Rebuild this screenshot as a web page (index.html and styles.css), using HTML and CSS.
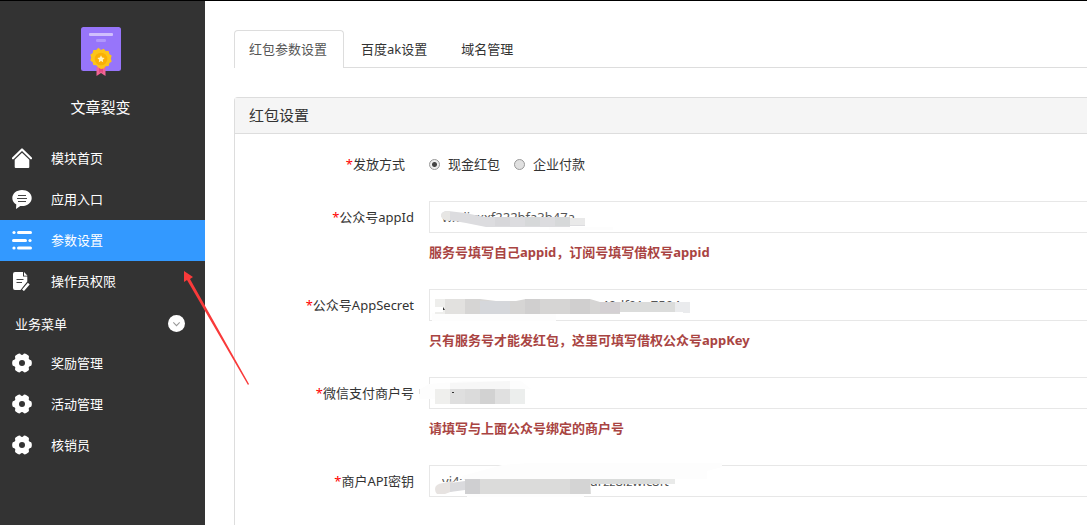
FILE: index.html
```html
<!DOCTYPE html>
<html lang="zh-CN">
<head>
<meta charset="utf-8">
<meta name="viewport" content="width=device-width, initial-scale=1">
<title>文章裂变</title>
<link rel="stylesheet" href="styles.css">
</head>
<body>
<svg class="defs" aria-hidden="true">
  <symbol id="gear" viewBox="0 0 20 20">
    <g fill="#fff">
      <circle cx="10" cy="10" r="8.2"/>
      <rect x="0.2" y="6.7" width="19.6" height="6.6" rx="2.4"/>
      <rect x="0.2" y="6.7" width="19.6" height="6.6" rx="2.4" transform="rotate(60 10 10)"/>
      <rect x="0.2" y="6.7" width="19.6" height="6.6" rx="2.4" transform="rotate(120 10 10)"/>
    </g>
    <circle cx="10" cy="10" r="3" fill="#333"/>
  </symbol>
</svg>
<div class="layout">
  <aside class="sidebar">
    <div class="brand">
      <svg class="logo" viewBox="0 0 40 50" aria-hidden="true">
        <rect width="40" height="44" rx="2.5" fill="#9775fa"/>
        <rect x="8" y="6" width="24" height="3" rx="1" fill="#d0bffd"/>
        <rect x="15" y="12" width="10" height="3" rx="1.2" fill="#b197fc"/>
        <path d="M15.5 40h9v9l-4.5-3-4.5 3z" fill="#f06595"/>
        <path d="M18 41h4v5l-2-1.500-2 1.500z" fill="#e64980"/>
        <path d="M20 23l2.700-1.200 2 2.200 3 .1.600 2.900 2.400 1.800-.9 2.800.9 2.900-2.400 1.700-.6 2.900-3 .2-2 2.200L20 42l-2.700-1.500-2-2.200-3-.2-.6-2.900-2.400-1.700.9-2.900-.9-2.800 2.400-1.800.6-2.900 3-.1 2-2.200z" fill="#fcc419"/>
        <circle cx="20" cy="32" r="6.300" fill="#fab005"/>
        <path d="M20 28.300l1.100 2.300 2.500.4-1.800 1.800.4 2.500-2.200-1.200-2.200 1.200.4-2.500-1.800-1.800 2.500-.4z" fill="#fff3bf"/>
      </svg>
      <div class="brand-name">文章裂变</div>
    </div>
    <nav class="menu">
      <a class="item" href="#"><svg class="icon" viewBox="0 0 20 20" aria-hidden="true"><path d="M1 10.300L10 1.500l9 8.800" fill="none" stroke="#fff" stroke-width="2.200" stroke-linecap="round" stroke-linejoin="round"/><path d="M10 4.800l7.300 7V19a1 1 0 0 1-1 1H3.700a1 1 0 0 1-1-1v-7.200z" fill="#fff"/></svg>模块首页</a>
      <a class="item" href="#"><svg class="icon" viewBox="0 0 20 20" aria-hidden="true"><path d="M10 1C4.500 1 .3 4.600.3 9c0 2.800 1.500 5 4 6.500L4 20l4.300-3 1.700.1c5.500 0 9.700-3.600 9.700-8.100S15.500 1 10 1z" fill="#fff"/><path d="M6 6.500h8M5 9.500h10M6 12.500h8" stroke="#444" stroke-width="1.100"/></svg>应用入口</a>
      <a class="item active" href="#"><svg class="icon" viewBox="0 0 20 20" aria-hidden="true"><g fill="#fff"><circle cx="2" cy="2.500" r="1.600"/><rect x="5" y="1" width="15" height="3" rx="1.500"/><rect x="0" y="9" width="15" height="3" rx="1.500"/><circle cx="18" cy="10.500" r="1.600"/><circle cx="2" cy="18" r="1.600"/><rect x="5" y="16.500" width="15" height="3" rx="1.500"/></g></svg>参数设置</a>
      <a class="item" href="#"><svg class="icon" viewBox="0 0 20 20" aria-hidden="true"><path d="M3 1h8v4.500h4.300v5L8.500 19H3a2 2 0 0 1-2-2V3a2 2 0 0 1 2-2z" fill="#fff"/><path d="M12 1l3.500 3.700H12z" fill="#fff"/><path d="M4.500 8.500h7M4.500 11.500h5.500" stroke="#444" stroke-width="1.200"/><path d="M17 12.500L11.500 19" stroke="#333" stroke-width="4"/><path d="M16.800 12.600L11 19.300" stroke="#fff" stroke-width="2.400"/></svg>操作员权限</a>
      <button class="group" type="button">业务菜单<svg class="chevron" viewBox="0 0 16 16" aria-hidden="true"><circle cx="8" cy="8" r="8" fill="#fff"/><path d="M5 7l3 3 3-3" fill="none" stroke="#999" stroke-width="1"/></svg></button>
      <a class="item" href="#"><svg class="icon" aria-hidden="true"><use href="#gear"/></svg>奖励管理</a>
      <a class="item" href="#"><svg class="icon" aria-hidden="true"><use href="#gear"/></svg>活动管理</a>
      <a class="item" href="#"><svg class="icon" aria-hidden="true"><use href="#gear"/></svg>核销员</a>
    </nav>
  </aside>
  <main class="main">
    <nav class="tabs">
      <a class="tab current" href="#">红包参数设置</a>
      <a class="tab" href="#">百度ak设置</a>
      <a class="tab" href="#">域名管理</a>
    </nav>
    <section class="panel">
      <h1 class="panel-title">红包设置</h1>
      <form class="form">
        <div class="row options" role="radiogroup" aria-labelledby="mode">
          <span class="label" id="mode"><span class="req">*</span>发放方式</span>
          <div class="choices">
            <label class="choice"><input class="radio" type="radio" name="mode" checked>现金红包</label>
            <label class="choice"><input class="radio" type="radio" name="mode">企业付款</label>
          </div>
        </div>
        <div class="row">
          <label class="label" for="appid"><span class="req">*</span>公众号appId</label>
          <div class="field">
            <input class="input" id="appid" type="text" value="wxdixxxf222bfa3b47a">
            <svg class="mask" viewBox="0 0 300 32" aria-hidden="true"><path d="M120 26h64v3h-64z" fill="#fdfdfd"/><path d="M12 15q0-5 7-5l17 2 20 4h85v7h15v2h-15v1H57l-10-2-10-2-23-4z" fill="#dcdcdf"/><path d="M12 15q0-5 9-5v10q-8 0-9-5z" fill="#e7e6e4"/><path d="M66 16h15v9H66z" fill="#d7d7da"/><path d="M96 16h15v9H96zM126 16h15v9h-15z" fill="#d6d8d9"/><path d="M141 17h15v7h-15z" fill="#e9e9e9"/></svg>
          </div>
          <p class="help">服务号填写自己appid，订阅号填写借权号appid</p>
        </div>
        <div class="row">
          <label class="label" for="secret"><span class="req">*</span>公众号AppSecret</label>
          <div class="field">
            <input class="input" id="secret" type="text" value="dxxxxxxxxxxxxxxxxxxxxxx40df91a7594">
            <svg class="mask" viewBox="0 0 300 32" aria-hidden="true"><path d="M3 24h124v8H3z" fill="#fdfdfd"/><path d="M6 10h10v15H6z" fill="#eeeeec"/><path d="M6 18h8v5H6z" fill="#fff"/><path d="M14 18l2 3h-2z" fill="#333"/><path d="M16 10h20v15H16z" fill="#e2e1df"/><path d="M36 10h15l16 2h20l10-2h64l10 3h20v12H36z" fill="#d6d5d4"/><path d="M51 12h15v13H51zM66 12h15v13H66z" fill="#d5d7db"/><path d="M96 10h15v15H96zM141 10h20v15h-20z" fill="#d0cfcf"/><path d="M171 13h20v11h-20z" fill="#d4d0d3"/><path d="M191 13h55v10h-55z" fill="#dbdcdb"/><path d="M246 13h15v11h-7v-1h-8z" fill="#eaebed"/></svg>
          </div>
          <p class="help">只有服务号才能发红包，这里可填写借权公众号appKey</p>
        </div>
        <div class="row">
          <label class="label" for="mch"><span class="req">*</span>微信支付商户号</label>
          <div class="field">
            <input class="input" id="mch" type="text">
            <svg class="mask" viewBox="0 0 300 32" aria-hidden="true"><path d="M-10 13L0 7l37-3h55l10 8H82v10H-10z" fill="#fdfdfd"/><path d="M-10 12h1v5h-1z" fill="#e2e2e2"/><path d="M21 6l60-2v8H21z" fill="#f7f7f7"/><path d="M6 12h15v15H6z" fill="#efefed"/><path d="M21 12h15v15H21z" fill="#dfdfdf"/><path d="M36 12h15v15H36z" fill="#dbdbdb"/><path d="M51 12h15v15H51z" fill="#d2d2d2"/><path d="M66 12h15v15H66z" fill="#e0e0e0"/><path d="M81 12h15v15H81z" fill="#eceeed"/><path d="M23 15h2v1h-2z" fill="#333"/></svg>
          </div>
          <p class="help">请填写与上面公众号绑定的商户号</p>
        </div>
        <div class="row">
          <label class="label" for="apikey"><span class="req">*</span>商户API密钥</label>
          <div class="field">
            <input class="input" id="apikey" type="text" value="yi4xxxxxxxxxxxxxxxxxxxdrzz8izwic8ft">
            <svg class="mask" viewBox="0 0 300 32" aria-hidden="true"><path d="M73 0L100-2h193v4l-15 4v8H33v-3z" fill="#fdfdfd"/><path d="M38 26h117v6H38z" fill="#fdfdfd"/><path d="M6 23q0-6 8-6h10l12-3v12L6 29z" fill="#fff"/><path d="M6 24q0-5 8-6l10-2v10l-8 3H8q-2-2-2-5z" fill="#e7e3e1"/><path d="M21 18l15-2v9l-15 2z" fill="#dadadd"/><path d="M36 14h15v15H36z" fill="#cfcfd1"/><path d="M51 14h110l1 15H51z" fill="#dbdbda"/><path d="M141 14h20v15h-20z" fill="#d4d4d4"/><path d="M161 14h70v5h-70z" fill="#dadcdb"/><path d="M231 14h15v5h-15z" fill="#e9eae9"/></svg>
          </div>
        </div>
      </form>
    </section>
  </main>
</div>
<svg class="pointer" viewBox="0 0 70 120" aria-hidden="true"><path d="M2 0l9 6-3 2 59 105-1 1L5 9l-3 2z" fill="#f93a3a"/></svg>
</body>
</html>
```
FILE: styles.css
```css
* { box-sizing: border-box; }

body {
  margin: 0;
  font: 13px/20px "Noto Sans", "Noto Sans CJK SC", sans-serif;
  color: #333;
  background: #fff;
  overflow-x: hidden;
}

.defs { display: none; }

.layout {
  display: flex;
  min-height: 100vh;
  border-top: 1px solid #000;
}

.sidebar {
  flex: 0 0 205px;
  background: #333;
  color: #fff;
}

.brand {
  display: flex;
  flex-direction: column;
  align-items: center;
  gap: 20px;
  padding: 26px 4px 21px 0;
}

.logo { width: 40px; height: 50px; }
.brand-name { font-size: 15px; }

.menu { display: flex; flex-direction: column; }

.item {
  display: flex;
  align-items: center;
  gap: 19px;
  height: 41px;
  padding: 0 0 2px 12px;
  color: #fff;
  text-decoration: none;
}

.item.active { background: #39f; }
.icon { width: 20px; height: 20px; }

.group {
  display: flex;
  align-items: center;
  justify-content: space-between;
  height: 41px;
  padding: 2px 20px 0 15px;
  border: 0;
  background: none;
  color: inherit;
  font: inherit;
}

.chevron { width: 17px; height: 17px; }

.main {
  flex: 1;
  min-width: 0;
  display: flex;
  flex-direction: column;
  padding: 29px 0 0 29px;
}

.tabs {
  display: flex;
  gap: 2px;
  margin-bottom: 29px;
  border-bottom: 1px solid #ddd;
}

.tab {
  padding: 8px 16px 8px 14px;
  border: 1px solid transparent;
  border-bottom: 0;
  color: #333;
  text-decoration: none;
}

.tab.current {
  margin-bottom: -1px;
  padding-bottom: 9px;
  border-color: #ddd;
  border-radius: 4px 4px 0 0;
  background: #fff;
  color: #555;
}

.panel {
  flex: 1;
  border: 1px solid #ddd;
  border-width: 1px 0 0 1px;
  border-radius: 4px 0 0 0;
}

.panel-title {
  margin: 0;
  padding: 7px 14px 8px;
  border-bottom: 1px solid #ddd;
  background: #f5f5f5;
  font-size: 15px;
  font-weight: 400;
}

.form {
  display: flex;
  flex-direction: column;
  gap: 27px;
  padding-top: 20px;
}

.row {
  display: grid;
  grid-template-columns: 179px 1fr;
  column-gap: 15px;
  row-gap: 9px;
}

.label { text-align: right; line-height: 32px; }
.options .label { padding-right: 9px; line-height: 20px; }
.req { color: red; }

.choices { display: flex; gap: 14px; }
.choice { display: flex; align-items: center; gap: 8px; }

.radio {
  appearance: none;
  width: 11px;
  height: 11px;
  margin: 0;
  border: 1px solid #999;
  border-radius: 50%;
  background: #e0e0e0;
}

.radio:checked { background: radial-gradient(circle, #444 0 2px, #eee 3px); }

.field { position: relative; }

.input {
  display: block;
  width: 100%;
  height: 32px;
  padding: 0 12px;
  border: 1px solid #e7e7e7;
  border-right: 0;
  background: #fff;
  color: #555;
  font: inherit;
}

.mask {
  position: absolute;
  top: 0;
  left: 0;
  width: 300px;
  height: 32px;
  overflow: visible;
  pointer-events: none;
}

.help {
  grid-column: 2;
  margin: 0;
  color: #a94442;
  font-weight: 700;
}

.pointer {
  position: absolute;
  top: 271px;
  left: 182px;
  width: 70px;
  height: 120px;
  pointer-events: none;
}
```
